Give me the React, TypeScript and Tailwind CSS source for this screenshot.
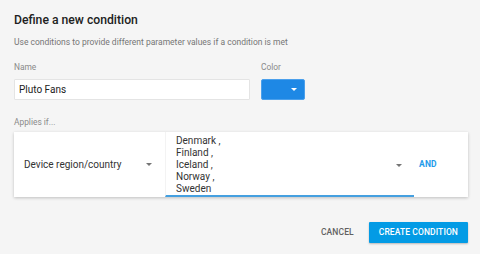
import React from "react";

function Caret({ color = "#757575" }: { color?: string }) {
  return (
    <svg width="6" height="3" viewBox="0 0 6 3" className="block">
      <path d="M0 0 L6 0 L3 3 Z" fill={color} />
    </svg>
  );
}

export default function App() {
  const countries = ["Denmark ,", "Finland ,", "Iceland ,", "Norway ,", "Sweden"];
  return (
    <div className="w-[480px] h-[254px] bg-[#f5f5f5] pl-[14px] pr-[12px] pt-[12px] font-['Roboto','Liberation_Sans',sans-serif] overflow-hidden">
      <h1 className="text-[12.2px] leading-[16px] font-medium text-[#212121]">Define a new condition</h1>
      <p className="mt-[8px] text-[8.5px] leading-[12px] text-[#757575]">
        Use conditions to provide different parameter values if a condition is met
      </p>

      <div className="mt-[13px] flex gap-[11px]">
        <div className="w-[236px] flex flex-col">
          <div className="text-[8.4px] leading-[12px] text-[#8a8a8a]">Name</div>
          <div className="mt-[6px] h-[21px] bg-white border border-[#e4e4e4] rounded-[1px] pl-[4px] flex items-center text-[10px] text-[#212121]">
            Pluto Fans
          </div>
        </div>
        <div className="w-[44px] flex flex-col">
          <div className="text-[8.4px] leading-[12px] text-[#8a8a8a]">Color</div>
          <div className="mt-[6px] h-[21px] bg-[#1e88e5] border border-[#4ba0ec] rounded-[2px] flex items-center justify-end pr-[7px]">
            <Caret color="#ffffff" />
          </div>
        </div>
      </div>

      <div className="mt-[16px] text-[8.4px] leading-[12px] text-[#8a8a8a]">Applies if...</div>

      <div className="mt-[4px] h-[65px] bg-white shadow-[0_1px_3px_rgba(0,0,0,0.22)] flex">
        <div className="w-[151px] flex items-center pl-[10px] pr-[13px]">
          <span className="flex-1 text-[10px] leading-[12px] text-[#333333]">Device region/country</span>
          <Caret />
        </div>
        <div className="w-[249px] flex items-center pl-[10px] pr-[12px] pt-[3px] border-b-2 border-[#45a0e0] border-l border-l-[#f3f3f3]">
          <div className="flex-1 self-start flex flex-col">
            {countries.map((c) => (
              <div key={c} className="text-[10px] leading-[12px] text-[#333333]">
                {c}
              </div>
            ))}
          </div>
          <Caret />
        </div>
        <div className="pl-[5px] flex items-center">
          <span className="text-[8.5px] font-bold text-[#1e9be9] tracking-[0.2px]">AND</span>
        </div>
      </div>

      <div className="mt-[25px] flex justify-end items-center gap-[15px]">
        <span className="text-[8.5px] font-medium text-[#616161] tracking-[0.1px]">CANCEL</span>
        <div className="h-[21px] px-[10px] bg-[#039be5] rounded-[1px] shadow-[0_1px_2px_rgba(0,0,0,0.25)] flex items-center">
          <span className="text-[8.5px] font-medium text-white tracking-[0.1px]">CREATE CONDITION</span>
        </div>
      </div>
    </div>
  );
}
